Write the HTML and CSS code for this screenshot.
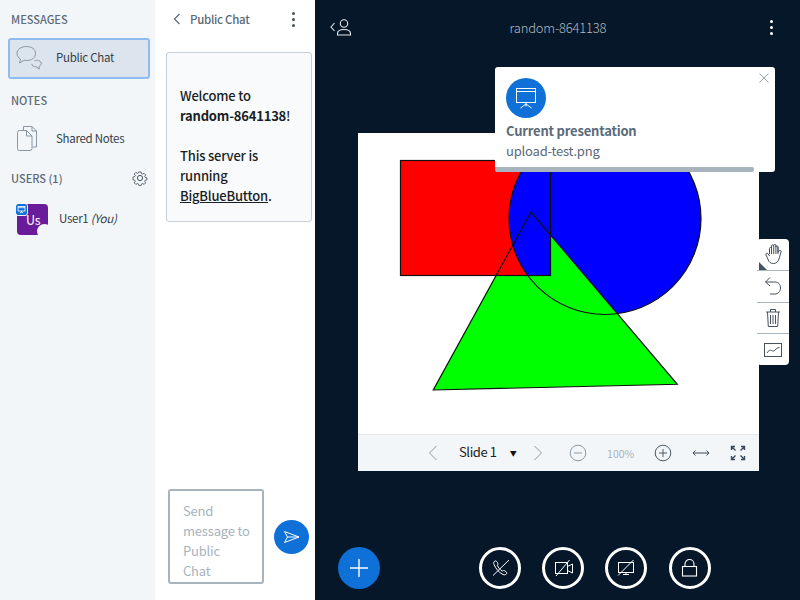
FILE: index.html
```html
<!DOCTYPE html>
<html lang="en">
<head>
<meta charset="utf-8">
<title>BigBlueButton</title>
<link rel="stylesheet" href="styles.css">
</head>
<body>
<div class="app">
  <aside class="sidebar">
    <h2 class="sec-title sec-messages">MESSAGES</h2>
    <div class="nav-item selected">
      <svg class="nav-icon" width="28" height="28" viewBox="0 0 28 28" fill="none" stroke="#8a96a3" stroke-width="1"><g transform="translate(-1 -2)"><path d="M12.500 3.500c-5.500 0-9.500 3-9.500 7 0 2.400 1.300 4.300 3.500 5.600L5.500 20l4.700-2.700c.8.1 1.500.2 2.300.2 5.500 0 9-3 9-7s-3.500-7-9-7z"/></g><path d="M19.500 16c1.200-.9 2.500-.9 4.200-.4 1.800.6 2.800 1.900 2.500 3.400-.2 1.100-1 2-2.200 2.400l.3 2.600-3.300-2.200c-2.400 0-4.300-1.200-4.200-3"/></svg>
      <span class="nav-label">Public Chat</span>
    </div>
    <h2 class="sec-title sec-notes">NOTES</h2>
    <div class="nav-item">
      <svg class="nav-icon" width="28" height="28" viewBox="0 0 28 28" fill="none" stroke="#8a96a3" stroke-width="1"><g transform="translate(-1 0)"><path d="M9.500 6V2.500H18l4.500 4.500v16h-4"/><path d="M18 2.500V7h4.500"/><path d="M3.500 8.500a2 2 0 0 1 2-2h7l5.500 5.500v12.500a2 2 0 0 1-2 2H5.500a2 2 0 0 1-2-2z"/><path d="M12.500 6.500V12H18"/></g></svg>
      <span class="nav-label">Shared Notes</span>
    </div>
    <div class="users-head">
      <h2 class="sec-title">USERS (1)</h2>
      <svg width="16" height="16" viewBox="0 0 16 16" fill="none" stroke="#46525e" stroke-width="1"><path d="M6.700 1h2.600l.4 2 1.300.6 1.800-1.100 1.800 1.800-1.100 1.800.6 1.300 2 .4v2.400l-2 .4-.6 1.300 1.100 1.800-1.800 1.800-1.800-1.100-1.300.6-.4 2H6.700l-.4-2-1.300-.6-1.800 1.100-1.800-1.800 1.100-1.800-.6-1.300-2-.4V6.800l2-.4.6-1.300-1.100-1.800 1.800-1.800L5 2.600l1.300-.6z" transform="translate(1.100 1.100) scale(.86)"/><circle cx="8" cy="8" r="2.600"/></svg>
    </div>
    <div class="user-row">
      <div class="avatar">
        <span class="avatar-text">Us</span>
        <span class="avatar-notch"></span>
        <span class="avatar-badge">
          <svg width="11" height="11" viewBox="0 0 11 11" fill="none" stroke="#fff" stroke-width=".8"><rect x="2" y="2.500" width="7" height="4.500"/><path d="M2 3.700h7M5.500 7v1.500M3.800 9l1.700-1 1.700 1"/></svg>
        </span>
      </div>
      <span class="user-name">User1 <em>(You)</em></span>
    </div>
  </aside>

  <section class="chat">
    <header class="chat-head">
      <svg class="chat-back" width="8" height="12" viewBox="0 0 8 12" fill="none" stroke="#5a6875" stroke-width="1.200"><path d="M6.500 1 1.500 6l5 5"/></svg>
      <span class="chat-title">Public Chat</span>
      <span class="kebab kebab-dark"><i></i><i></i><i></i></span>
    </header>
    <div class="welcome">
      <p>Welcome to<br><b>random-8641138</b>!</p>
      <p>This server is<br>running<br><a href="#">BigBlueButton</a>.</p>
    </div>
    <div class="composer">
      <div class="chat-input">Send<br>message to<br>Public<br>Chat</div>
      <div class="send">
        <svg width="18" height="14" viewBox="0 0 18 14" fill="none" stroke="#fff" stroke-width="1"><path d="M1.500 1.500 16 7 1.500 12.500 4.500 7zM4.500 7H16"/></svg>
      </div>
    </div>
  </section>

  <main class="main">
    <header class="top">
      <svg width="22" height="18" viewBox="0 0 22 18" fill="none" stroke="#e4e8ec" stroke-width="1.100"><path d="M4.500 5 1 9l3.500 4"/><circle cx="14" cy="5.500" r="3.700"/><path d="M7.500 17v-1.500c0-2.500 2.500-4 6.500-4s6.500 1.500 6.500 4V17z"/></svg>
      <span class="room">random-8641138</span>
      <span class="kebab kebab-light"><i></i><i></i><i></i></span>
    </header>

    <div class="stage">
      <div class="slide">
        <svg class="slide-art" width="401" height="301" viewBox="358 133 401 301">
          <circle cx="605" cy="218.500" r="96" fill="#00f"/>
          <path d="M531 212 433.300 390 677.300 384.300z" fill="#0f0"/>
          <rect x="400.500" y="160.500" width="150" height="115" fill="#f00"/>
          <clipPath id="rectclip"><rect x="400.500" y="160.500" width="150" height="115"/></clipPath>
          <circle cx="605" cy="218.500" r="96" fill="#00f" clip-path="url(#rectclip)"/>
          <g fill="none" stroke="#111" stroke-width="1.200">
            <circle cx="605" cy="218.500" r="96"/>
            <path d="M531 212 433.300 390 677.300 384.300z"/>
            <rect x="400.500" y="160.500" width="150" height="115"/>
          </g>
        </svg>
        <div class="slide-bar">
          <svg class="ctl-prev" width="10" height="16" viewBox="0 0 10 16" fill="none" stroke="#8d99a5" stroke-width="1"><path d="M8.500 1 1.500 8l7 7"/></svg>
          <span class="slide-num">Slide 1</span>
          <span class="slide-caret">▼</span>
          <svg class="ctl-next" width="10" height="16" viewBox="0 0 10 16" fill="none" stroke="#8d99a5" stroke-width="1"><path d="M1.500 1l7 7-7 7"/></svg>
          <svg class="ctl-minus" width="18" height="18" viewBox="0 0 18 18" fill="none" stroke="#8d99a5" stroke-width="1"><circle cx="9" cy="9" r="7.800"/><path d="M5 9h8"/></svg>
          <span class="zoom-val">100%</span>
          <svg class="ctl-plus" width="18" height="18" viewBox="0 0 18 18" fill="none" stroke="#4c5a68" stroke-width="1"><circle cx="9" cy="9" r="7.800"/><path d="M5 9h8M9 5v8"/></svg>
          <svg class="ctl-fit" width="18" height="8" viewBox="0 0 18 8" fill="none" stroke="#3c4a58" stroke-width="1"><path d="M1 4h16M3.500 1.500 1 4l2.500 2.500M14.500 1.500 17 4l-2.500 2.500"/></svg>
          <svg class="ctl-full" width="16" height="16" viewBox="0 0 16 16" fill="none" stroke="#3c4a58" stroke-width="1.400"><path d="M1.500 5V1.500H5M1.500 1.500l4 4M14.500 5V1.500H11M14.500 1.500l-4 4M1.500 11v3.500H5M1.500 14.500l4-4M14.500 11v3.500H11M14.500 14.500l-4-4"/></svg>
        </div>
      </div>
    </div>

    <footer class="actions">
      <div class="plus">
        <svg width="20" height="20" viewBox="0 0 20 20" stroke="#fff" stroke-width="1.400"><path d="M10 1v18M1 10h18"/></svg>
      </div>
      <div class="action-group">
        <div class="ring"><svg width="22" height="22" viewBox="0 0 22 22" fill="none" stroke="#fff" stroke-width="1"><path d="M6 4c-1.200.6-1.800 1.800-1 3.500C7 12 10 15.500 14 17.500c1.800.8 3.300 0 3.700-1.200.3-.8-.4-1.500-1.700-2.300-1.200-.7-1.900-.6-2.700.2-2.300-1.500-4-3.500-5-6 .8-.8.800-1.500.2-2.700C7.600 4.200 6.800 3.600 6 4z"/><path d="M20 3 4 18.500"/></svg></div>
        <div class="ring"><svg width="24" height="22" viewBox="0 0 24 22" fill="none" stroke="#fff" stroke-width="1"><rect x="4.500" y="5.500" width="12" height="11"/><path d="M16.500 9.500l5-2.500v9l-5-2.500"/><path d="M18.500 3 5 19"/></svg></div>
        <div class="ring"><svg width="24" height="22" viewBox="0 0 24 22" fill="none" stroke="#fff" stroke-width="1"><rect x="4.500" y="5.500" width="15" height="10"/><path d="M9 17.500h6M12 15.500v2"/><path d="M19.500 3 4 18.500"/></svg></div>
        <div class="ring"><svg width="18" height="20" viewBox="0 0 18 20" fill="none" stroke="#fff" stroke-width="1.100"><rect x="1.500" y="8.500" width="14" height="9.500"/><path d="M4 8.500V6a4.500 4.500 0 0 1 9 0v2.500"/></svg></div>
      </div>
    </footer>

    <div class="toast">
      <svg class="toast-close" width="10" height="10" viewBox="0 0 10 10" stroke="#8d99a5" stroke-width=".9"><path d="M.5.500l9 9M9.500.500l-9 9"/></svg>
      <div class="toast-icon">
        <svg width="22" height="24" viewBox="0 0 22 24" fill="none" stroke="#fff" stroke-width="1"><rect x="1.500" y="2.500" width="19" height="14"/><path d="M1.500 5.500h19"/><path d="M11 16.500v4M5.500 22l5.500-4 5.500 4"/></svg>
      </div>
      <div class="toast-title">Current presentation</div>
      <div class="toast-file">upload-test.png</div>
      <div class="toast-progress"></div>
    </div>

    <div class="wb-tools">
      <div class="wb-tool wb-hand">
        <svg width="20" height="22" viewBox="0 0 20 22" fill="none" stroke="#46525e" stroke-width="1"><path d="M5.500 11V5.500c0-1.500 2-1.500 2 0V3c0-1.500 2.200-1.500 2.200 0v-.5c0-1.500 2.200-1.500 2.200 0V4c0-1.500 2.100-1.500 2.100 0v5.500l1-1.500c.9-1.300 2.700-.6 2 1L15 16c-1 3-3 4.500-5.500 4.500C6.500 20.500 5 19 4.300 17L2 12c-.7-1.600 1.200-2.500 2.100-1.200l1.400 2.200M7.500 5.500V11M9.700 3v8M11.900 2.500V11M14 4v7"/></svg>
        <span class="wb-corner"></span>
      </div>
      <div class="wb-tool">
        <svg width="18" height="20" viewBox="0 0 18 20" fill="none" stroke="#46525e" stroke-width="1"><path d="M6 1.500 1.500 6l4.500 4M1.500 6H11c3.500 0 5.500 2.500 5.500 6s-2.500 6-5.500 6H6"/></svg>
      </div>
      <div class="wb-tool">
        <svg width="16" height="20" viewBox="0 0 16 20" fill="none" stroke="#46525e" stroke-width="1"><path d="M1 4h14M5.500 4V1.500h5V4M2.500 4l.8 14.500h9.400L13.500 4M5.500 7v9M8 7v9M10.500 7v9"/></svg>
      </div>
      <div class="wb-tool">
        <svg width="20" height="16" viewBox="0 0 20 16" fill="none" stroke="#46525e" stroke-width="1"><rect x="1.500" y="1.500" width="17" height="13"/><path d="M4 11c1.500-2.500 3-3.500 4.500-2.500s2.500.5 3.500-.5 2.500-2.500 4.500-2.500"/></svg>
      </div>
    </div>
  </main>
</div>
</body>
</html>
```
FILE: styles.css
```css
* { box-sizing: border-box; }
html, body { margin: 0; padding: 0; height: 100%; }
body {
  font-family: "Noto Sans CJK SC", "Noto Sans", sans-serif;
  font-size: 12px;
  overflow: hidden;
}
.app { display: flex; width: 800px; height: 600px; }

/* Left navigation */
.sidebar {
  width: 155px;
  flex: none;
  background: #f3f6f9;
  padding: 0 5px 0 8px;
  display: flex;
  flex-direction: column;
}
.sec-title {
  margin: 0;
  font-size: 11px;
  font-weight: 500;
  line-height: 16px;
  color: #5b6a78;
}
.sec-messages { padding: 11px 0 0 3px; }
.sec-notes { padding: 13px 0 0 3px; }
.nav-item {
  display: flex;
  align-items: center;
  height: 41px;
  padding-left: 5px;
  border: 2px solid transparent;
  border-radius: 3px;
  color: #333f4a;
}
.sec-messages + .nav-item { margin-top: 11px; }
.sec-notes + .nav-item { margin-top: 9px; }
.selected { background: #dce4ed; border-color: #8fbcee; }
.selected .nav-label { margin-top: -3px; }
.nav-icon { flex: none; margin-right: 13px; }
.nav-label { font-size: 11.500px; letter-spacing: -.025em; line-height: 16px; }
.users-head {
  display: flex;
  align-items: center;
  justify-content: space-between;
  padding: 9px 2px 0 3px;
  height: 30px;
}
.user-row {
  display: flex;
  align-items: center;
  margin-top: 16px;
  padding-left: 9px;
  height: 31px;
}
.avatar {
  position: relative;
  flex: none;
  width: 31px;
  height: 31px;
  border-radius: 4px;
  background: #6a1b9a;
  color: #fff;
  display: flex;
  align-items: center;
  padding: 0 0 0 9px;
}
.avatar-text { font-size: 12.500px; letter-spacing: -.015em; }
.avatar-notch {
  position: absolute;
  right: -4px;
  bottom: -4px;
  width: 15px;
  height: 15px;
  border-radius: 50%;
  background: #f3f6f9;
}
.avatar-badge {
  position: absolute;
  left: -1px;
  top: 0;
  width: 11px;
  height: 11px;
  border-radius: 2px;
  background: #0f70d7;
  display: flex;
  outline: 1px solid #f3f6f9;
}
.user-name {
  margin: -3px 0 0 11px;
  font-size: 11.500px;
  letter-spacing: -.025em;
  color: #333f4a;
}

/* Chat panel */
.chat {
  width: 160px;
  flex: none;
  background: #fff;
  display: flex;
  flex-direction: column;
  padding: 0 6px 0 11px;
}
.chat-head {
  display: flex;
  align-items: center;
  height: 38px;
  padding-left: 7px;
  color: #5b6a78;
}
.chat-title {
  margin-left: 9px;
  font-size: 11.500px;
  letter-spacing: -.025em;
  font-weight: 500;
  line-height: 16px;
}
.kebab { display: flex; flex-direction: column; gap: 3px; }
.kebab i { display: block; width: 3px; height: 3px; border-radius: 50%; }
.kebab-dark { margin-left: auto; margin-right: 14px; }
.kebab-dark i { background: #46525e; }
.kebab-light i { background: #fff; }
.welcome {
  margin-top: 14px;
  width: 146px;
  height: 170px;
  padding: 33px 0 0 13px;
  background: #f9fafc;
  border: 1px solid #c6cfd8;
  border-radius: 3px;
  font-size: 13px;
  letter-spacing: -.015em;
  font-weight: 500;
  line-height: 20px;
  color: #1a1f25;
}
.welcome p { margin: 0 0 20px; }
.welcome b { font-weight: 700; }
.welcome a { color: inherit; }
.composer {
  margin-top: auto;
  display: flex;
  align-items: center;
  padding: 0 0 16px 2px;
  gap: 10px;
}
.chat-input {
  width: 96px;
  height: 95px;
  padding: 10px 6px 0 13px;
  border: 2px solid #a7b3bd;
  border-radius: 3px;
  font-size: 13px;
  letter-spacing: -.015em;
  line-height: 20px;
  color: #a7b3bd;
  overflow: hidden;
}
.send {
  width: 35px;
  height: 34px;
  border-radius: 50%;
  background: #0f70d7;
  display: flex;
  align-items: center;
  justify-content: center;
}

/* Main area */
.main {
  position: relative;
  flex: 1;
  background: #06172a;
  display: flex;
  flex-direction: column;
}
.top {
  display: flex;
  align-items: center;
  height: 54px;
  padding: 0 27px 0 15px;
}
.room {
  flex: 1;
  text-align: center;
  font-size: 13px;
  letter-spacing: -.015em;
  font-weight: 300;
  color: #b0b8bf;
  padding-left: 16px;
  padding-right: 22px;
}
.stage { flex: 1; padding: 79px 0 0 43px; }
.slide { width: 401px; height: 338px; background: #fff; display: flex; flex-direction: column; }
.slide-art { display: block; flex: none; }
.slide-bar {
  flex: 1;
  display: flex;
  align-items: center;
  background: #f3f6f9;
  border-top: 1px solid #e3e8ed;
  padding: 0 0 0 70px;
}
.slide-num { margin: -2px 0 0 21px; font-size: 13px; letter-spacing: -.03em; line-height: 18px; color: #222; }
.slide-caret { margin-left: 13px; width: 8px; font-size: 7px; color: #111; }
.ctl-next { margin-left: 15px; }
.ctl-minus { margin-left: 26px; }
.zoom-val { margin-left: 19px; width: 30px; font-size: 10.500px; color: #a7b3bd; text-align: center; }
.ctl-plus { margin-left: 18px; }
.ctl-fit { margin-left: 20px; }
.ctl-full { margin-left: 20px; }

.actions {
  flex: none;
  height: 53px;
  display: flex;
  padding: 0 0 0 23px;
  align-items: flex-start;
}
.plus {
  width: 42px;
  height: 42px;
  border-radius: 50%;
  background: #0f70d7;
  display: flex;
  align-items: center;
  justify-content: center;
}
.action-group { display: flex; gap: 21px; margin-left: 99px; }
.ring {
  width: 42px;
  height: 42px;
  border: 3px solid #fff;
  border-radius: 50%;
  display: flex;
  align-items: center;
  justify-content: center;
}
.ring:last-child { margin-left: 1px; }

/* Overlays */
.toast {
  position: absolute;
  left: 180px;
  top: 67px;
  width: 280px;
  height: 105px;
  padding: 11px 11px 0;
  background: #fff;
  border-radius: 3px;
  color: #5b6a78;
  overflow: hidden;
}
.toast-close { position: absolute; right: 6px; top: 6px; }
.toast-icon {
  width: 40px;
  height: 40px;
  border-radius: 50%;
  background: #0f70d7;
  display: flex;
  align-items: center;
  justify-content: center;
}
.toast-title { margin-top: 3px; font-size: 13px; letter-spacing: -.015em; font-weight: 700; line-height: 20px; }
.toast-file { font-size: 13px; letter-spacing: -.015em; line-height: 20px; }
.toast-progress {
  position: absolute;
  left: 0;
  bottom: 0;
  width: 259px;
  height: 5px;
  background: #a7b3bd;
  border-radius: 0 2px 2px 0;
}
.wb-tools {
  position: absolute;
  left: 442px;
  top: 239px;
  width: 32px;
  height: 126px;
  background: #fff;
  border-radius: 4px;
  display: flex;
  flex-direction: column;
}
.wb-tool {
  position: relative;
  flex: 1;
  display: flex;
  align-items: center;
  justify-content: center;
  border-bottom: 1px solid #a7b3bd;
}
.wb-tool:last-child { border-bottom: 0; }
.wb-hand { padding-left: 2px; }
.wb-corner {
  position: absolute;
  left: 2px;
  bottom: 0;
  border-left: 8px solid #46525e;
  border-top: 8px solid transparent;
}
```
